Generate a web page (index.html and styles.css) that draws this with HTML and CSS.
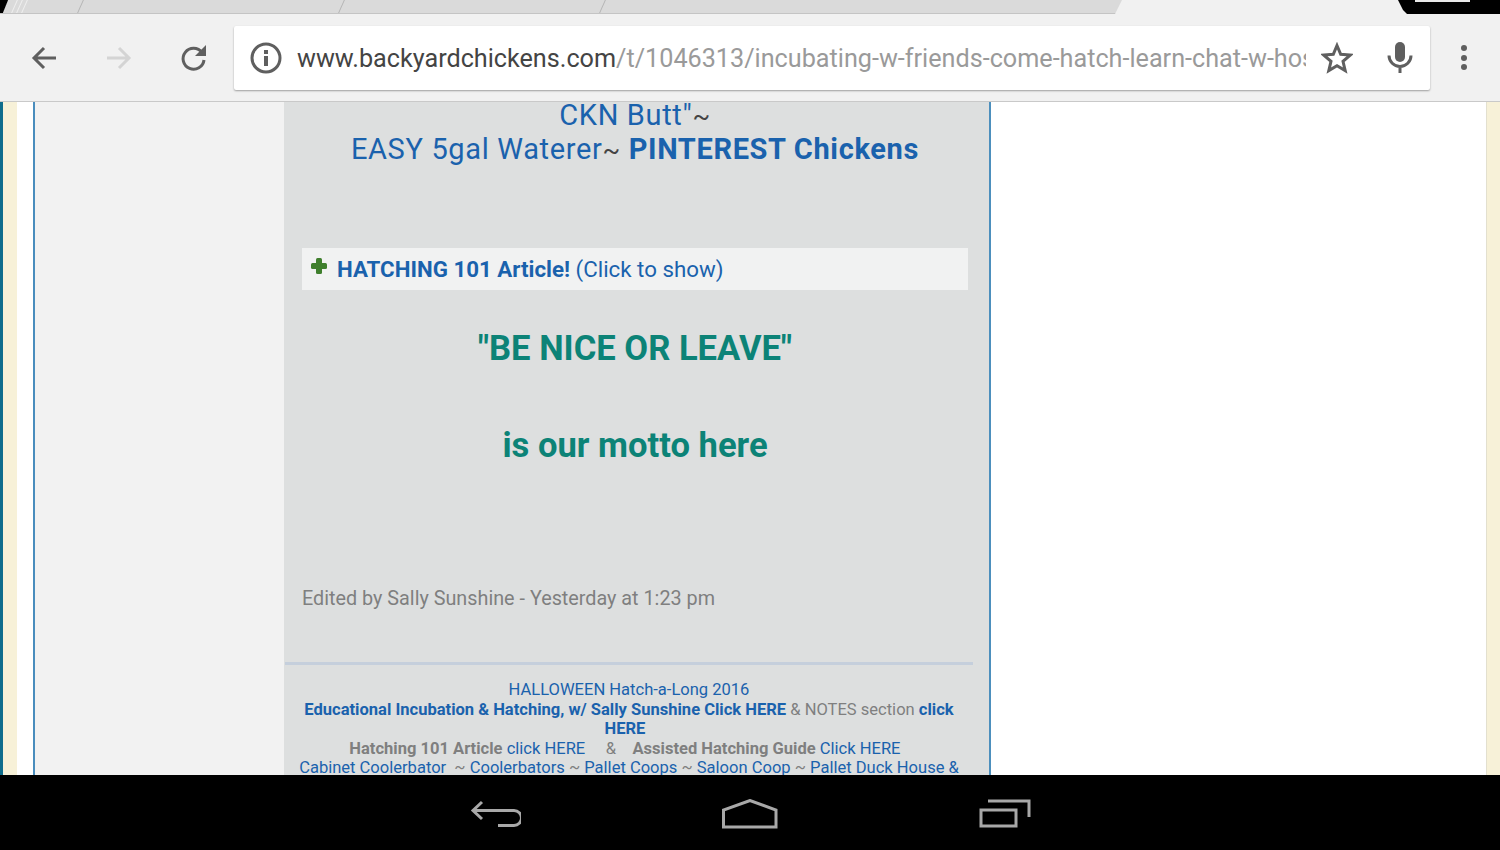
FILE: index.html
```html
<!DOCTYPE html>
<html lang="en">
<head>
  <meta charset="UTF-8">
  <title>Incubating w/ Friends</title>
  <link rel="stylesheet" href="styles.css">
</head>
<body>
  <div class="tabstrip">
    <div class="tabs">
      <div class="tab tab-sliver"></div>
      <div class="tab tab-sliver"></div>
      <div class="tab tab-sliver"></div>
      <div class="tab tab-first"></div>
      <div class="tab"></div>
      <div class="tab"></div>
      <div class="tab tab-last"></div>
    </div>
    <div class="tab-switcher"><span></span></div>
  </div>

  <div class="toolbar">
    <button class="tool-btn">
      <svg width="30" height="30" viewBox="0 0 30 30"><path d="M27 15H5M15 5L5 15l10 10" fill="none" stroke="#5f5f5f" stroke-width="3"/></svg>
    </button>
    <button class="tool-btn">
      <svg width="30" height="30" viewBox="0 0 30 30"><path d="M3 15h22M15 5l10 10-10 10" fill="none" stroke="#d4d4d4" stroke-width="3"/></svg>
    </button>
    <button class="tool-btn">
      <svg width="30" height="30" viewBox="0 0 30 30"><path d="M23 9.500A10.500 10.500 0 1 0 25 17" fill="none" stroke="#5f5f5f" stroke-width="3"/><path d="M27 2v11H16z" fill="#5f5f5f"/></svg>
    </button>
    <div class="omnibox">
      <svg class="info-icon" width="34" height="34" viewBox="0 0 34 34"><circle cx="17" cy="17" r="14" fill="none" stroke="#5f5f5f" stroke-width="3"/><path d="M15 15h4v10h-4zM15 9h4v4h-4z" fill="#5f5f5f"/></svg>
      <div class="url"><span class="url-host">www.backyardchickens.com</span>/t/1046313/incubating-w-friends-come-hatch-learn-chat-w-host-sally-sunshine</div>
      <svg class="star-icon" width="32" height="32" viewBox="0 0 32 32"><path d="M16 3.500l3.700 8.800 9.500.8-7.200 6.200 2.200 9.300L16 23.700l-8.200 4.900L10 19.300l-7.200-6.200 9.500-.8z" fill="none" stroke="#5f5f5f" stroke-width="3"/></svg>
      <svg class="mic-icon" width="26" height="34" viewBox="0 0 26 34"><rect x="8" y="1" width="10" height="20" rx="5" fill="#5f5f5f"/><path d="M2 14.500a11 11 0 0 0 22 0M13 25.500V32" fill="none" stroke="#5f5f5f" stroke-width="3"/></svg>
    </div>
    <div class="menu-dots"><span></span><span></span><span></span></div>
  </div>

  <div class="viewport">
    <div class="edge-teal"></div>
    <div class="edge-cream"></div>
    <div class="page">
      <div class="sidebar"></div>
      <div class="post">
        <div class="post-head">
          <a class="link">CKN Butt"</a><span class="tilde">~</span><br>
          <a class="link">EASY 5gal Waterer</a><span class="tilde">~</span> <a class="link strong">PINTEREST Chickens</a>
        </div>
        <div class="spoiler">
          <svg width="16" height="16" viewBox="0 0 16 16"><rect x="5" width="6" height="16" rx="1.500" fill="#3f7f2d"/><rect y="5" width="16" height="6" rx="1.500" fill="#3f7f2d"/></svg>
          <span><a class="link strong">HATCHING 101 Article!</a> <a class="link">(Click to show)</a></span>
        </div>
        <h2 class="motto">"BE NICE OR LEAVE"</h2>
        <h2 class="motto motto-second">is our motto here</h2>
        <p class="edited">Edited by Sally Sunshine - Yesterday at 1:23 pm</p>
        <div class="signature">
          <a class="link">HALLOWEEN Hatch-a-Long 2016</a><br>
          <a class="link strong">Educational Incubation &amp; Hatching, w/ Sally Sunshine Click HERE</a> &amp; NOTES section <a class="link strong">click HERE</a>&nbsp;&nbsp;<br>
          <b>Hatching 101 Article</b> <a class="link">click HERE</a> &nbsp;&nbsp;&nbsp; &amp; &nbsp;&nbsp; <b>Assisted Hatching Guide</b> <a class="link">Click HERE</a>&nbsp;&nbsp;<br>
          <a class="link">Cabinet Coolerbator</a> &nbsp;~ <a class="link">Coolerbators</a> ~ <a class="link">Pallet Coops</a> ~ <a class="link">Saloon Coop</a> ~ <a class="link">Pallet Duck House &amp;</a>
        </div>
      </div>
      <div class="right-col"></div>
    </div>
    <div class="edge-right"></div>
  </div>

  <div class="navbar">
    <svg width="54" height="30" viewBox="0 0 54 30"><path d="M28 26.500h16a7.500 7.500 0 0 0 0-15H3M12 3L3 11.500l9 8.500" fill="none" stroke="#a8a8a8" stroke-width="3" transform="translate(3 0)"/></svg>
    <svg width="58" height="30" viewBox="0 0 58 30"><path d="M2.500 28V11L29 1.500 55 11v17z" fill="none" stroke="#a8a8a8" stroke-width="3"/></svg>
    <svg width="54" height="30" viewBox="0 0 54 30"><path d="M2 11h35v16H2zM9 2h41v16" fill="none" stroke="#a8a8a8" stroke-width="3"/></svg>
  </div>
</body>
</html>
```

FILE: styles.css
```css
:root {
  --link: #1a62ad;
  --grey: #7f7f7f;
  --teal: #0c8377;
  --icon: #5f5f5f;
}

html, body {
  margin: 0;
  height: 850px;
  overflow: hidden;
}

body {
  width: 1500px;
  display: flex;
  flex-direction: column;
  font-family: Roboto, sans-serif;
  background: #000;
}

/* tab strip */
.tabstrip {
  height: 14px;
  background: #f1f1f1;
  display: flex;
  justify-content: space-between;
}

.tabs {
  display: flex;
  width: 1122px;
  padding-left: 10px;
  background: linear-gradient(112deg, #000 7px, #dadada 8px);
  border-bottom: 1px solid #c4c4c4;
  box-sizing: border-box;
  clip-path: polygon(0 0, 100% 0, 1115px 100%, 0 100%);
}

.tab {
  flex: 0 0 260px;
  border-right: 1px solid #b5b5b5;
  transform: skewX(-24deg);
}

.tab-sliver {
  flex-basis: 4px;
  border-right-color: #f0f0f0;
}

.tab-first {
  flex-basis: 55px;
}

.tab-last {
  flex-basis: 263px;
  border-right: none;
}

.tab-switcher {
  width: 102px;
  height: 14px;
  background: #000;
  clip-path: polygon(0 0, 100% 0, 100% 100%, 9px 100%, 5px 10px);
}

.tab-switcher span {
  display: block;
  width: 55px;
  height: 2px;
  margin-left: 17px;
  background: #e8e8e8;
}

/* toolbar */
.toolbar {
  height: 88px;
  box-sizing: border-box;
  background: #f1f1f1;
  border-bottom: 1px solid #c9c9c9;
  display: flex;
  align-items: center;
  padding-left: 29px;
}

.tool-btn {
  width: 30px;
  height: 30px;
  padding: 0;
  margin-right: 45px;
  border: none;
  background: none;
  display: flex;
}

.tool-btn:nth-child(3) {
  margin-right: 25px;
}

.omnibox {
  width: 1196px;
  height: 64px;
  box-sizing: border-box;
  background: #fff;
  border-radius: 2px;
  box-shadow: 0 1px 2px rgba(0, 0, 0, 0.35);
  display: flex;
  align-items: center;
  padding-left: 15px;
}

.url {
  width: 1009px;
  margin: 2px 15px 0 14px;
  overflow: hidden;
  white-space: nowrap;
  font-size: 25.200px;
  color: #9a9a9a;
}

.url-host {
  color: #444;
}

.mic-icon {
  margin-left: 34px;
}

.menu-dots {
  margin-left: 31px;
  display: flex;
  flex-direction: column;
  gap: 3.500px;
}

.menu-dots span {
  width: 6px;
  height: 6px;
  border-radius: 50%;
  background: var(--icon);
}

/* page */
.viewport {
  height: 673px;
  display: flex;
  overflow: hidden;
  background: #fff;
}

.edge-teal {
  width: 3px;
  background: #0f6d8c;
}

.edge-cream {
  width: 14px;
  background: #f7f1d8;
}

.page {
  flex: 1;
  display: flex;
  padding-left: 16px;
}

.sidebar {
  width: 251px;
  box-sizing: border-box;
  background: #f2f2f2;
  border-left: 2px solid #4a8dbd;
}

.post {
  width: 707px;
  box-sizing: border-box;
  background: #dddfdf;
  border-right: 2px solid #4c8fbd;
  color: var(--grey);
}

.link {
  color: var(--link);
}

.strong {
  font-weight: 700;
}

.post-head {
  margin-top: -4px;
  width: 702px;
  text-align: center;
  font-size: 29px;
  line-height: 34px;
  letter-spacing: 0.650px;
}

.tilde {
  color: #444;
  font-size: 26px;
  line-height: 0;
}

.spoiler {
  margin: 82px 0 0 18px;
  width: 666px;
  height: 42px;
  background: #f1f2f2;
  display: flex;
  align-items: center;
  font-size: 22.300px;
  padding-left: 8px;
  box-sizing: border-box;
}

.spoiler svg {
  margin: -6px 10px 0 1px;
}

.motto {
  margin: 37px 0 0;
  width: 702px;
  text-align: center;
  font-size: 34.600px;
  line-height: 42px;
  font-weight: 700;
  color: var(--teal);
}

.motto-second {
  margin-top: 55px;
}

.edited {
  margin: 120px 0 0 18px;
  font-size: 19.800px;
  line-height: 26px;
}

.signature {
  margin: 50px 0 0 1px;
  width: 688px;
  border-top: 3px solid #c5cfdc;
  padding: 15px 10px 0;
  box-sizing: border-box;
  text-align: center;
  font-size: 16.550px;
  line-height: 19.500px;
}

.right-col {
  flex: 1;
}

.edge-right {
  width: 14px;
  background: #f7f1d8;
  border-left: 1px solid #e3e0cf;
  box-sizing: border-box;
}

/* android nav */
.navbar {
  flex: 1;
  background: #000;
  display: flex;
  justify-content: center;
  align-items: center;
  gap: 200px;
  padding-top: 2px;
}
```
